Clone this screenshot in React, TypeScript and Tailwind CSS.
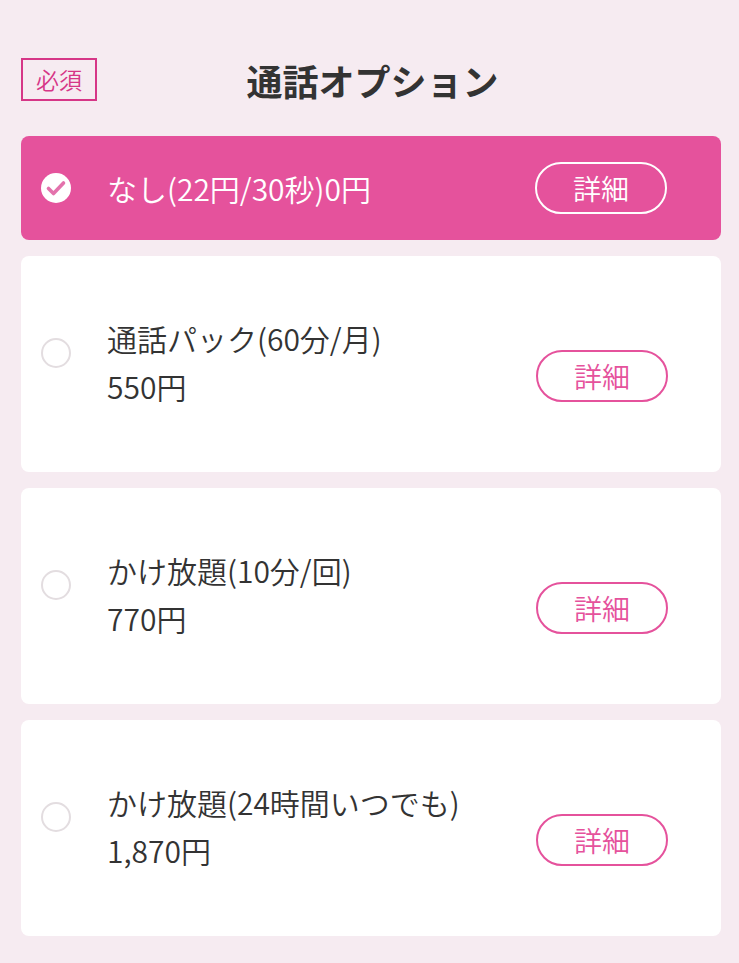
import React from 'react';

type Plan = {
    id: string;
    name: string;
    price?: string;
};

const plans: Plan[] = [
    { id: 'none', name: 'なし(22円/30秒)0円' },
    { id: 'pack', name: '通話パック(60分/月)', price: '550円' },
    { id: 'ten', name: 'かけ放題(10分/回)', price: '770円' },
    { id: 'all', name: 'かけ放題(24時間いつでも)', price: '1,870円' },
];

const CheckedMark = () => (
    <svg width="30" height="30" viewBox="0 0 30 30" className="shrink-0">
        <circle cx="15" cy="15" r="15" fill="#ffffff" />
        <path
            d="M7.5 15.5 L12.5 20.5 L22.5 10"
            fill="none"
            stroke="#dc4f97"
            strokeWidth="3.6"
            strokeLinecap="round"
            strokeLinejoin="round"
            opacity="0.8"
        />
    </svg>
);

const EmptyMark = () => (
    <span className="block h-[30px] w-[30px] shrink-0 rounded-full border-2 border-[#e3dde0] bg-white" />
);

export default function App() {
    const selected = 'none';

    return (
        <div
            className="min-h-[963px] w-[739px] bg-[#f6ebf1] pl-[21px] pr-[18px] pt-[58px] text-[#333333]"
            style={{ fontFamily: '"Noto Sans CJK JP", "Noto Sans", sans-serif' }}
        >
            <div className="relative mb-[35px] flex h-[43px] items-center justify-center">
                <span className="absolute left-0 top-0 flex h-[43px] w-[76px] items-center justify-center border-2 border-[#d63687] text-[23px] font-[350] leading-none text-[#d63687]">
                    必須
                </span>
                <h1 className="ml-[3px] text-[36px] font-bold leading-none text-[#333333]">
                    通話オプション
                </h1>
            </div>

            <div className="flex flex-col gap-4">
                {plans.map((plan) => {
                    const isSelected = plan.id === selected;

                    if (isSelected) {
                        return (
                            <div
                                key={plan.id}
                                className="flex h-[104px] items-center rounded-lg bg-[#e5529c] pl-5 pr-[54px] text-white"
                            >
                                <CheckedMark />
                                <span className="ml-[36px] flex-1 text-[30px] font-[350] leading-[48px]">
                                    {plan.name}
                                </span>
                                <button className="flex h-[52px] w-[132px] items-center justify-center rounded-full border-2 border-white text-[28px] font-[350] leading-none text-white">
                                    詳細
                                </button>
                            </div>
                        );
                    }

                    return (
                        <div
                            key={plan.id}
                            className="flex h-[216px] items-center rounded-lg bg-white pl-5 pr-[53px]"
                        >
                            <div className="mb-[22px]">
                                <EmptyMark />
                            </div>
                            <div className="mb-[4px] ml-[36px] flex-1 text-[30px] font-[350] leading-[48px]">
                                <div>{plan.name}</div>
                                <div>{plan.price}</div>
                            </div>
                            <button className="mt-[24px] flex h-[52px] w-[132px] items-center justify-center rounded-full border-2 border-[#e5529c] text-[28px] font-[350] leading-none text-[#e5529c]">
                                詳細
                            </button>
                        </div>
                    );
                })}
            </div>
        </div>
    );
}
